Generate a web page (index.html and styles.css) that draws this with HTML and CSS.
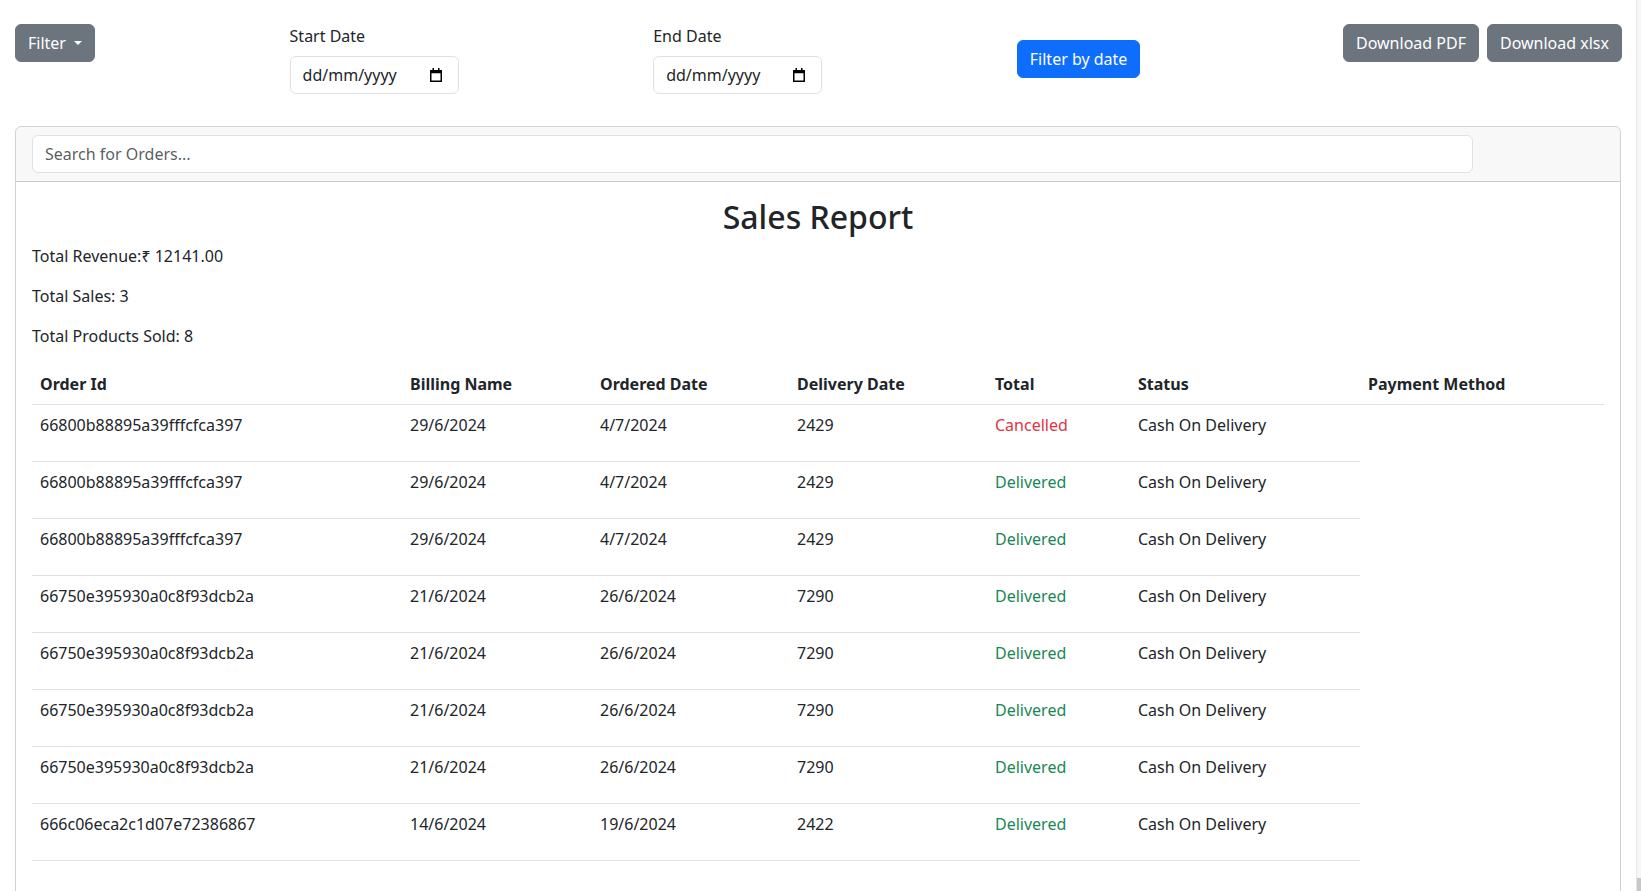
FILE: index.html
```html
<!DOCTYPE html>
<html lang="en">
<head>
<meta charset="utf-8">
<title>Sales Report</title>
<link rel="stylesheet" href="styles.css">
</head>
<body>
<div class="page">
  <main class="main">
    <div class="toolbar">
      <button class="btn btn-secondary dropdown-toggle">Filter</button>
      <div class="field">
        <label class="form-label">Start Date</label>
        <div class="date-input"><span>dd/mm/yyyy</span>
          <svg class="cal" width="12" height="14" viewBox="0 0 12 14"><rect x="2.5" y="0" width="1.5" height="3" fill="#000"/><rect x="8" y="0" width="1.5" height="3" fill="#000"/><rect x="0.75" y="2.75" width="10.5" height="10.5" fill="none" stroke="#000" stroke-width="1.5"/><rect x="0.75" y="2.75" width="10.5" height="2.5" fill="#000"/></svg>
        </div>
      </div>
      <div class="field">
        <label class="form-label">End Date</label>
        <div class="date-input"><span>dd/mm/yyyy</span>
          <svg class="cal" width="12" height="14" viewBox="0 0 12 14"><rect x="2.5" y="0" width="1.5" height="3" fill="#000"/><rect x="8" y="0" width="1.5" height="3" fill="#000"/><rect x="0.75" y="2.75" width="10.5" height="10.5" fill="none" stroke="#000" stroke-width="1.5"/><rect x="0.75" y="2.75" width="10.5" height="2.5" fill="#000"/></svg>
        </div>
      </div>
      <button class="btn btn-primary btn-center">Filter by date</button>
      <div class="downloads">
        <button class="btn btn-secondary">Download PDF</button>
        <button class="btn btn-secondary">Download xlsx</button>
      </div>
    </div>

    <div class="card">
      <div class="card-header">
        <input class="search" type="text" placeholder="Search for Orders...">
      </div>
      <div class="card-body">
        <h2 class="title">Sales Report</h2>
        <p class="stat">Total Revenue:₹ 12141.00</p>
        <p class="stat">Total Sales: 3</p>
        <p class="stat">Total Products Sold: 8</p>
        <table class="table">
          <colgroup>
            <col class="w-id"><col class="w-bill"><col class="w-ord"><col class="w-del"><col class="w-tot"><col class="w-stat"><col>
          </colgroup>
          <thead>
            <tr><th>Order Id</th><th>Billing Name</th><th>Ordered Date</th><th>Delivery Date</th><th>Total</th><th>Status</th><th>Payment Method</th></tr>
          </thead>
          <tbody>
            <tr><td>66800b88895a39fffcfca397</td><td>29/6/2024</td><td>4/7/2024</td><td>2429</td><td class="danger">Cancelled</td><td>Cash On Delivery</td></tr>
            <tr><td>66800b88895a39fffcfca397</td><td>29/6/2024</td><td>4/7/2024</td><td>2429</td><td class="success">Delivered</td><td>Cash On Delivery</td></tr>
            <tr><td>66800b88895a39fffcfca397</td><td>29/6/2024</td><td>4/7/2024</td><td>2429</td><td class="success">Delivered</td><td>Cash On Delivery</td></tr>
            <tr><td>66750e395930a0c8f93dcb2a</td><td>21/6/2024</td><td>26/6/2024</td><td>7290</td><td class="success">Delivered</td><td>Cash On Delivery</td></tr>
            <tr><td>66750e395930a0c8f93dcb2a</td><td>21/6/2024</td><td>26/6/2024</td><td>7290</td><td class="success">Delivered</td><td>Cash On Delivery</td></tr>
            <tr><td>66750e395930a0c8f93dcb2a</td><td>21/6/2024</td><td>26/6/2024</td><td>7290</td><td class="success">Delivered</td><td>Cash On Delivery</td></tr>
            <tr><td>66750e395930a0c8f93dcb2a</td><td>21/6/2024</td><td>26/6/2024</td><td>7290</td><td class="success">Delivered</td><td>Cash On Delivery</td></tr>
            <tr><td>666c06eca2c1d07e72386867</td><td>14/6/2024</td><td>19/6/2024</td><td>2422</td><td class="success">Delivered</td><td>Cash On Delivery</td></tr>
          </tbody>
        </table>
      </div>
    </div>
  </main>
  <div class="scrollbar"><div class="track"></div><div class="thumb"></div></div>
</div>
</body>
</html>
```

FILE: styles.css
```css
html, body {
  margin: 0;
  padding: 0;
  overflow: hidden;
  background: #fff;
}

body {
  font-family: "Noto Sans", "Liberation Sans", sans-serif;
  font-size: 16px;
  line-height: 1.5;
  color: #212529;
}

.page {
  display: flex;
  height: 100vh;
}

.main {
  flex: 1;
  min-width: 0;
  height: 100vh;
  overflow: hidden;
}

.scrollbar {
  width: 4px;
  border-left: 1px solid #e6e6e6;
  background: #f7f7f7;
  display: flex;
  flex-direction: column;
}

.scrollbar .track {
  flex: 1;
}

.scrollbar .thumb {
  height: 13px;
  background: #c8c8c8;
}

.toolbar {
  display: flex;
  justify-content: space-between;
  align-items: flex-start;
  padding: 24px 14px 0 15px;
}

.btn {
  display: inline-block;
  font-family: inherit;
  font-size: 16px;
  line-height: 24px;
  padding: 6px 12px;
  border: 1px solid transparent;
  border-radius: 6px;
  color: #fff;
  cursor: pointer;
}

.btn-secondary {
  background: #6c757d;
  border-color: #6c757d;
}

.btn-primary {
  background: #0d6efd;
  border-color: #0d6efd;
}

.btn-center {
  align-self: center;
}

.dropdown-toggle::after {
  content: "";
  display: inline-block;
  margin-left: 8px;
  vertical-align: 0.255em;
  border-top: 0.3em solid;
  border-right: 0.3em solid transparent;
  border-left: 0.3em solid transparent;
}

.downloads {
  display: flex;
  gap: 8px;
  margin-left: 8px;
}

.form-label {
  display: block;
  margin-bottom: 8px;
}

.date-input {
  box-sizing: border-box;
  width: 169px;
  height: 38px;
  border: 1px solid #dee2e6;
  border-radius: 6px;
  padding: 0 16px 0 12px;
  display: flex;
  align-items: center;
  justify-content: space-between;
  color: #212529;
}

.cal {
  display: block;
  margin-top: -1px;
}

.card {
  margin: 32px 15px 0;
  border: 1px solid rgba(0, 0, 0, 0.175);
  border-radius: 6px;
}

.card-header {
  padding: 8px 16px;
  background: rgba(33, 37, 41, 0.03);
  border-bottom: 1px solid rgba(0, 0, 0, 0.175);
  border-radius: 5px 5px 0 0;
}

.search {
  display: block;
  box-sizing: border-box;
  width: 91.67%;
  height: 38px;
  padding: 6px 12px;
  font-family: inherit;
  font-size: 16px;
  line-height: 24px;
  color: #212529;
  background: #fff;
  border: 1px solid #dee2e6;
  border-radius: 6px;
  outline: none;
}

.search::placeholder {
  color: rgba(33, 37, 41, 0.75);
}

.card-body {
  padding: 16px 16px 120px;
}

.title {
  margin: 0 0 7.5px;
  font-size: 32px;
  font-weight: 500;
  line-height: 1.2;
  text-align: center;
}

.stat {
  margin: 0 0 16px;
}

.table {
  width: 100%;
  border-collapse: collapse;
  table-layout: fixed;
}

.w-id { width: 370px; }
.w-bill { width: 190px; }
.w-ord { width: 197px; }
.w-del { width: 198px; }
.w-tot { width: 143px; }
.w-stat { width: 230px; }

.table th,
.table td {
  padding: 8px;
  text-align: left;
  vertical-align: top;
  border-bottom: 1px solid #dee2e6;
}

.table th {
  font-weight: 700;
}

.table td {
  padding-bottom: 24px;
}

.danger {
  color: #dc3545;
}

.success {
  color: #198754;
}
```
